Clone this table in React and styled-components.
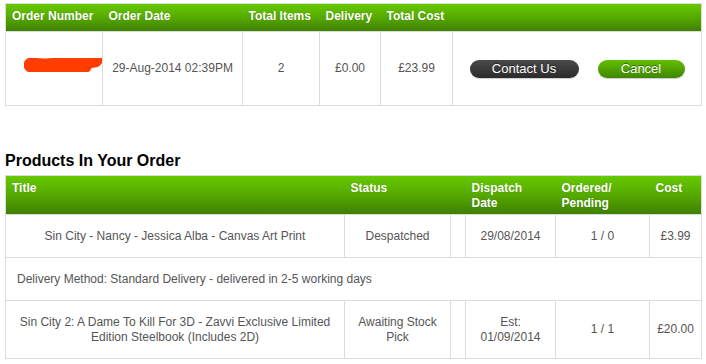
import styled, { createGlobalStyle } from "styled-components"

const GlobalStyle = createGlobalStyle`
  body {
    margin: 0;
    background: #fff;
    font-family: "Liberation Sans", Arial, sans-serif;
  }
`

const summaryCols = [97, 140, 77, 61, 72, 249]
const productCols = [339, 106, 15, 90, 94, 52]

const products = [
  {
    title: "Sin City - Nancy - Jessica Alba - Canvas Art Print",
    status: "Despatched",
    date: "29/08/2014",
    qty: "1 / 0",
    cost: "£3.99",
    height: 43,
  },
  {
    title: "Sin City 2: A Dame To Kill For 3D - Zavvi Exclusive Limited Edition Steelbook (Includes 2D)",
    status: "Awaiting Stock Pick",
    date: "Est: 01/09/2014",
    qty: "1 / 1",
    cost: "£20.00",
    height: 58,
  },
]

// hand-drawn marker scribble hiding the order number
const Redaction = () => (
  <svg width="97" height="34" viewBox="0 0 97 34">
    <defs>
      <filter id="soft">
        <feGaussianBlur stdDeviation="0.6" />
      </filter>
    </defs>
    <g stroke="#ff3c00" strokeLinecap="round" fill="none" filter="url(#soft)">
      <path d="M25 13 C 40 15, 60 13, 75 10 C 82 9, 87 8, 89 8" strokeWidth="15" />
      <path d="M42 17 C 55 20, 68 19, 80 15" strokeWidth="11" />
    </g>
  </svg>
)

const App = () => {
  return (
    <Page>
      <GlobalStyle />
      <Table>
        <colgroup>
          {summaryCols.map((w, i) => (
            <col key={i} style={{ width: w }} />
          ))}
        </colgroup>
        <thead>
          <HeadRow $height={28}>
            <Th>Order Number</Th>
            <Th>Order Date</Th>
            <Th>Total Items</Th>
            <Th>Delivery</Th>
            <Th>Total Cost</Th>
            <Th />
          </HeadRow>
        </thead>
        <tbody>
          <Row $height={74}>
            <Td $pad={0}>
              <Redaction />
            </Td>
            <Td>29-Aug-2014 02:39PM</Td>
            <Td>2</Td>
            <Td>£0.00</Td>
            <Td>£23.99</Td>
            <Td>
              <Actions>
                <PillButton $variant="dark">Contact Us</PillButton>
                <PillButton $variant="green">Cancel</PillButton>
              </Actions>
            </Td>
          </Row>
        </tbody>
      </Table>

      <Heading>Products In Your Order</Heading>

      <Table>
        <colgroup>
          {productCols.map((w, i) => (
            <col key={i} style={{ width: w }} />
          ))}
        </colgroup>
        <thead>
          <HeadRow $height={39}>
            <Th>Title</Th>
            <Th colSpan={2}>Status</Th>
            <Th>Dispatch Date</Th>
            <Th>Ordered/ Pending</Th>
            <Th>Cost</Th>
          </HeadRow>
        </thead>
        <tbody>
          <ProductRow item={products[0]} />
          <Row $height={43}>
            <Td colSpan={6} $align="left" $pad={11}>
              Delivery Method: Standard Delivery - delivered in 2-5 working days
            </Td>
          </Row>
          <ProductRow item={products[1]} />
        </tbody>
      </Table>
    </Page>
  )
}

const ProductRow = ({ item }) => (
  <Row $height={item.height}>
    <Td>{item.title}</Td>
    <Td>{item.status}</Td>
    <Td />
    <Td>{item.date}</Td>
    <Td>{item.qty}</Td>
    <Td>{item.cost}</Td>
  </Row>
)

const Page = styled.div`
  padding: 3px 5px 0 5px;
  width: 696px;
`

const Table = styled.table`
  width: 696px;
  table-layout: fixed;
  border-collapse: collapse;
  border: 1px solid #dcdcdc;
`

const HeadRow = styled.tr`
  height: ${(p) => p.$height}px;
  background: linear-gradient(to bottom, #67c900 0%, #55a800 50%, #3e7d00 100%);
`

const Th = styled.th`
  padding: 5px 6px 0;
  vertical-align: top;
  text-align: left;
  color: #fff;
  font-size: 12px;
  font-weight: bold;
  line-height: 15px;
  text-shadow: 0 0 1px rgba(0, 0, 0, 0.25);
`

const Row = styled.tr`
  height: ${(p) => p.$height}px;
`

const Td = styled.td`
  border: 1px solid #dcdcdc;
  padding: 0 ${(p) => p.$pad ?? 4}px;
  text-align: ${(p) => p.$align || "center"};
  vertical-align: middle;
  color: #555;
  font-size: 12px;
  line-height: 15px;

  svg {
    display: block;
  }
`

const Actions = styled.div`
  display: flex;
  justify-content: center;
  gap: 19px;
`

const PillButton = styled.button`
  height: 18px;
  width: ${(p) => (p.$variant === "dark" ? 109 : 87)}px;
  border: 0;
  border-radius: 9px;
  padding: 0;
  color: #fff;
  font-family: "Liberation Sans", Arial, sans-serif;
  font-size: 13px;
  line-height: 18px;
  text-shadow: 0 -1px 0 rgba(0, 0, 0, 0.4);
  background: ${(p) =>
    p.$variant === "dark"
      ? "linear-gradient(to bottom, #4a4a4a, #2b2b2b)"
      : "linear-gradient(to bottom, #62c000, #3f8600)"};
  box-shadow: 0 1px 1px rgba(0, 0, 0, 0.2);
`

const Heading = styled.h2`
  margin: 45px 0 5px;
  font-size: 16px;
  line-height: 19px;
  font-weight: bold;
  color: #000;
`

export default App
